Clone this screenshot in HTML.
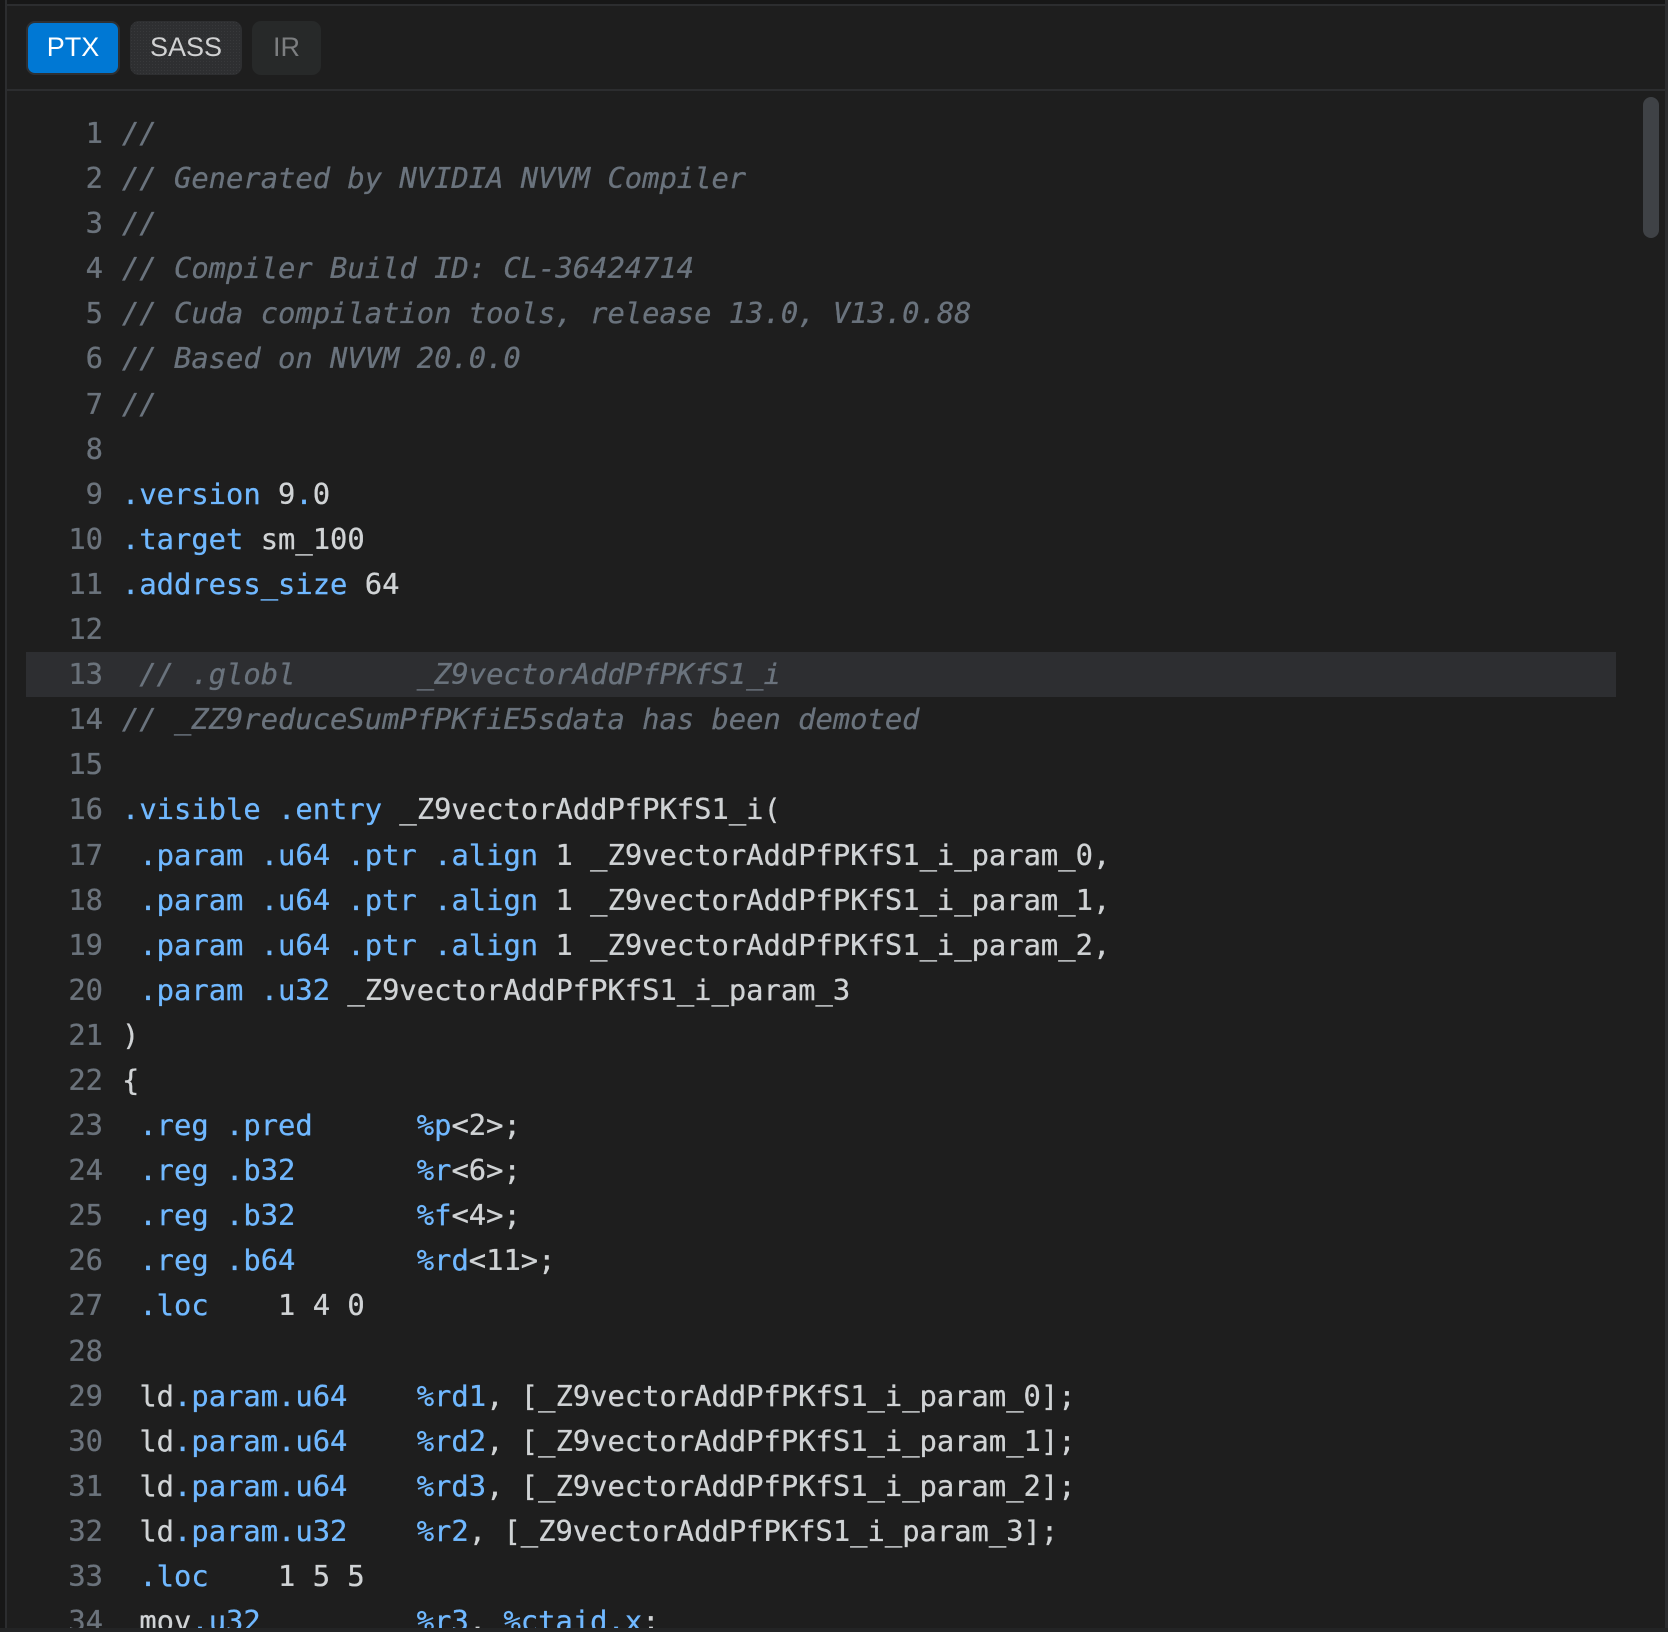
<!DOCTYPE html>
<html><head><meta charset="utf-8"><style>
html,body{margin:0;padding:0;background:#1c1c1c}
#f{position:relative;width:1668px;height:1632px;overflow:hidden;background:#1e1e1e}
.bd{position:absolute;background:#2c2d2f}
.btn{position:absolute;box-sizing:border-box;font:27px/1 "Liberation Sans",sans-serif;text-align:center;border-radius:9px}
#code{position:absolute;left:0;top:111px;width:1668px;font:28.8px/45.1px "DejaVu Sans Mono",monospace;color:#d0d3d5;-webkit-text-stroke:0.3px currentColor}
.l{position:relative;height:45.1px}
.n{position:absolute;left:0;width:103px;text-align:right;color:#6b737c}
.c{position:absolute;left:122px;white-space:pre}
i{color:#6a737d;font-style:italic}
b{font-weight:normal;color:#70b8ff}
</style></head><body><div id="f">
<div class="bd" style="left:0;top:0;width:1668px;height:4px;background:#171717"></div>
<div class="bd" style="left:0;top:4px;width:1668px;height:2px"></div>
<div class="bd" style="left:0;top:0;width:5px;height:1632px;background:#171717"></div>
<div class="bd" style="left:5px;top:0;width:2px;height:1632px"></div>
<div class="bd" style="left:1665px;top:0;width:3px;height:1632px"></div>
<div class="bd" style="left:7px;top:89px;width:1658px;height:2px"></div>
<div class="btn" style="left:26px;top:21px;width:94px;height:54px;background:#0078d4;border:2px solid #2e3033;color:#fff;line-height:48px">PTX</div>
<div class="btn" style="left:130px;top:21px;width:112px;height:54px;background:#2e2f31 radial-gradient(circle,#38393b 0.6px,transparent 0.7px) 0 0/3px 3px;color:#d0d1d2;line-height:52px">SASS</div>
<div class="btn" style="left:252px;top:21px;width:69px;height:54px;background:#272929;color:#7c7e80;line-height:52px">IR</div>
<div style="position:absolute;left:26px;top:652px;width:1590px;height:45px;background:#2d2e31"></div>
<div style="position:absolute;left:1643px;top:97px;width:16px;height:141px;border-radius:8px;background:#3f4246"></div>
<div id="code">
<div class="l"><span class="n">1</span><span class="c"><i>//</i></span></div>
<div class="l"><span class="n">2</span><span class="c"><i>// Generated by NVIDIA NVVM Compiler</i></span></div>
<div class="l"><span class="n">3</span><span class="c"><i>//</i></span></div>
<div class="l"><span class="n">4</span><span class="c"><i>// Compiler Build ID: CL-36424714</i></span></div>
<div class="l"><span class="n">5</span><span class="c"><i>// Cuda compilation tools, release 13.0, V13.0.88</i></span></div>
<div class="l"><span class="n">6</span><span class="c"><i>// Based on NVVM 20.0.0</i></span></div>
<div class="l"><span class="n">7</span><span class="c"><i>//</i></span></div>
<div class="l"><span class="n">8</span></div>
<div class="l"><span class="n">9</span><span class="c"><b>.version</b> 9<b>.</b>0</span></div>
<div class="l"><span class="n">10</span><span class="c"><b>.target</b> sm_100</span></div>
<div class="l"><span class="n">11</span><span class="c"><b>.address_size</b> 64</span></div>
<div class="l"><span class="n">12</span></div>
<div class="l"><span class="n">13</span><span class="c"> <i>// .globl       _Z9vectorAddPfPKfS1_i</i></span></div>
<div class="l"><span class="n">14</span><span class="c"><i>// _ZZ9reduceSumPfPKfiE5sdata has been demoted</i></span></div>
<div class="l"><span class="n">15</span></div>
<div class="l"><span class="n">16</span><span class="c"><b>.visible</b> <b>.entry</b> _Z9vectorAddPfPKfS1_i(</span></div>
<div class="l"><span class="n">17</span><span class="c"> <b>.param</b> <b>.u64</b> <b>.ptr</b> <b>.align</b> 1 _Z9vectorAddPfPKfS1_i_param_0,</span></div>
<div class="l"><span class="n">18</span><span class="c"> <b>.param</b> <b>.u64</b> <b>.ptr</b> <b>.align</b> 1 _Z9vectorAddPfPKfS1_i_param_1,</span></div>
<div class="l"><span class="n">19</span><span class="c"> <b>.param</b> <b>.u64</b> <b>.ptr</b> <b>.align</b> 1 _Z9vectorAddPfPKfS1_i_param_2,</span></div>
<div class="l"><span class="n">20</span><span class="c"> <b>.param</b> <b>.u32</b> _Z9vectorAddPfPKfS1_i_param_3</span></div>
<div class="l"><span class="n">21</span><span class="c">)</span></div>
<div class="l"><span class="n">22</span><span class="c">{</span></div>
<div class="l"><span class="n">23</span><span class="c"> <b>.reg</b> <b>.pred</b>      <b>%p</b>&lt;2&gt;;</span></div>
<div class="l"><span class="n">24</span><span class="c"> <b>.reg</b> <b>.b32</b>       <b>%r</b>&lt;6&gt;;</span></div>
<div class="l"><span class="n">25</span><span class="c"> <b>.reg</b> <b>.b32</b>       <b>%f</b>&lt;4&gt;;</span></div>
<div class="l"><span class="n">26</span><span class="c"> <b>.reg</b> <b>.b64</b>       <b>%rd</b>&lt;11&gt;;</span></div>
<div class="l"><span class="n">27</span><span class="c"> <b>.loc</b>    1 4 0</span></div>
<div class="l"><span class="n">28</span></div>
<div class="l"><span class="n">29</span><span class="c"> ld<b>.param.u64</b>    <b>%rd1</b>, [_Z9vectorAddPfPKfS1_i_param_0];</span></div>
<div class="l"><span class="n">30</span><span class="c"> ld<b>.param.u64</b>    <b>%rd2</b>, [_Z9vectorAddPfPKfS1_i_param_1];</span></div>
<div class="l"><span class="n">31</span><span class="c"> ld<b>.param.u64</b>    <b>%rd3</b>, [_Z9vectorAddPfPKfS1_i_param_2];</span></div>
<div class="l"><span class="n">32</span><span class="c"> ld<b>.param.u32</b>    <b>%r2</b>, [_Z9vectorAddPfPKfS1_i_param_3];</span></div>
<div class="l"><span class="n">33</span><span class="c"> <b>.loc</b>    1 5 5</span></div>
<div class="l"><span class="n">34</span><span class="c"> mov<b>.u32</b>         <b>%r3</b>, <b>%ctaid.x</b>;</span></div>
</div>
<div class="bd" style="left:0;top:1628px;width:1668px;height:4px;background:#232425"></div>
</div></body></html>
